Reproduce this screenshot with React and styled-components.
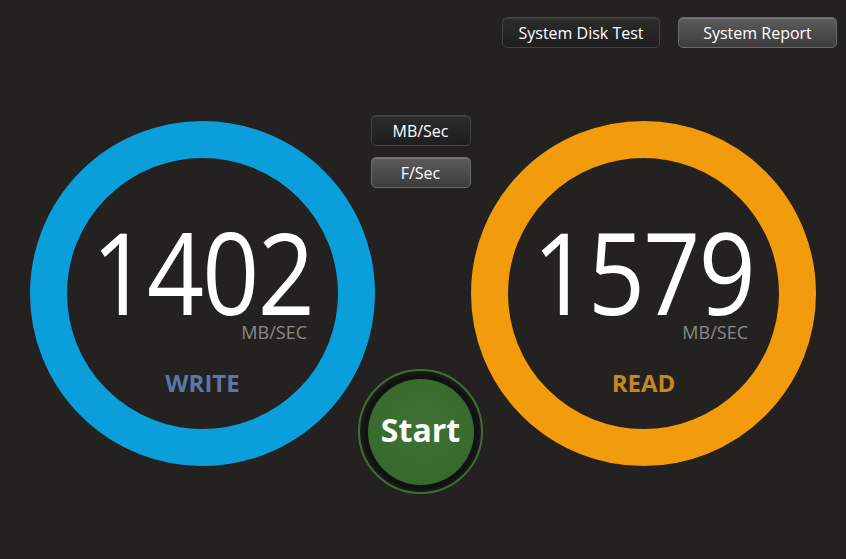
import React from 'react'
import styled, { createGlobalStyle } from 'styled-components'

const GlobalStyle = createGlobalStyle`
  html, body {
    margin: 0;
    padding: 0;
    background: #232221;
  }
  body {
    font-family: "Open Sans", "Liberation Sans", sans-serif;
    color: #fff;
  }
`

const Screen = styled.div`
  width: 846px;
  height: 559px;
  overflow: hidden;
  background: #232221;
`

const TopBar = styled.div`
  display: flex;
  justify-content: flex-end;
  gap: 18px;
  padding: 17px 9px 0 0;
`

const PillButton = styled.button`
  height: 31px;
  width: ${p => p.$w}px;
  border-radius: 5px;
  border: 1px solid ${p => (p.$active ? '#6a6a6a' : '#444')};
  background: ${p =>
    p.$active
      ? 'linear-gradient(#5c5c5c, #3c3c3c)'
      : 'linear-gradient(#2c2c2c, #1e1e1e)'};
  box-shadow: inset 0 1px 0 ${p => (p.$active ? '#777' : '#3a3a3a')};
  color: #fff;
  font-family: "Open Sans", "Liberation Sans", sans-serif;
  font-size: 16px;
  padding: 0;
  cursor: pointer;
`

const Main = styled.div`
  display: grid;
  grid-template-columns: 345px 96px 345px;
  padding-left: 30px;
  margin-top: 67px;
`

const Ring = styled.div`
  box-sizing: border-box;
  width: 345px;
  height: 345px;
  margin-top: 6px;
  border-radius: 50%;
  border: 37px solid ${p => p.$color};
  display: flex;
  flex-direction: column;
  align-items: center;
`

const Value = styled.div`
  margin-top: 63px;
  font-size: 114px;
  line-height: 100px;
  font-weight: 400;
  letter-spacing: -2px;
  transform: scaleX(0.875);
  color: #fff;
`

const Unit = styled.div`
  align-self: flex-end;
  margin-right: 31px;
  margin-top: 1px;
  font-size: 18px;
  line-height: 20px;
  color: #8a8a8a;
`

const Label = styled.div`
  margin-top: 27px;
  font-size: 24px;
  font-weight: 700;
  line-height: 28px;
  color: ${p => p.$color};
`

const Middle = styled.div`
  display: flex;
  flex-direction: column;
  align-items: center;
  margin-right: 5px;
`

const UnitToggles = styled.div`
  display: flex;
  flex-direction: column;
  gap: 11px;
`

const StartOuter = styled.div`
  box-sizing: border-box;
  flex: none;
  width: 125px;
  height: 125px;
  margin-top: 181px;
  border-radius: 50%;
  border: 2px solid #3d7332;
  background: #1c1c1b;
  display: flex;
  align-items: center;
  justify-content: center;
`

const StartButton = styled.button`
  width: 106px;
  height: 106px;
  border-radius: 50%;
  border: none;
  background: radial-gradient(circle at 50% 45%, #3e7233, #356629);
  box-shadow: 0 0 0 3px #121212, 0 0 4px 4px #0c0c0c;
  color: #fff;
  font-family: "Open Sans", "Liberation Sans", sans-serif;
  font-size: 32px;
  font-weight: 700;
  padding: 0 0 4px;
  cursor: pointer;
`

const Gauge = ({ value, label, color, labelColor }) => (
  <Ring $color={color}>
    <Value>{value}</Value>
    <Unit>MB/SEC</Unit>
    <Label $color={labelColor}>{label}</Label>
  </Ring>
)

const App = () => {
  return (
    <Screen>
      <GlobalStyle />
      <TopBar>
        <PillButton $w={158}>System Disk Test</PillButton>
        <PillButton $w={159} $active>System Report</PillButton>
      </TopBar>
      <Main>
        <Gauge value="1402" label="WRITE" color="#0a9fdb" labelColor="#5a77a6" />
        <Middle>
          <UnitToggles>
            <PillButton $w={100}>MB/Sec</PillButton>
            <PillButton $w={100} $active>F/Sec</PillButton>
          </UnitToggles>
          <StartOuter>
            <StartButton>Start</StartButton>
          </StartOuter>
        </Middle>
        <Gauge value="1579" label="READ" color="#f29b0c" labelColor="#c8861f" />
      </Main>
    </Screen>
  )
}

export default App
